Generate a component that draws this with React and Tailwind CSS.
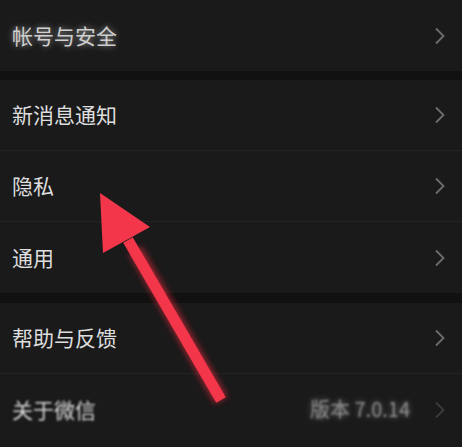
import React from "react";

const Chevron = ({ dim }) => (
  <svg width="12" height="18" viewBox="0 0 12 18" className={dim ? "opacity-40 blur-[0.6px]" : ""}>
    <path d="M2 1.5 L9.5 9 L2 16.5" fill="none" stroke="#6e6e6e" strokeWidth="1.8" />
  </svg>
);

const Row = ({ label, right, glow, blurry, divider }) => (
  <div className={`relative flex h-[71px] items-center justify-between pl-3 pr-[16px] ${divider ? "border-b border-[#242424]" : ""}`}>
    <span
      className={`mb-[1px] text-[21px] leading-none ${glow ? "text-[#cfcfcf] [text-shadow:0_0_6px_rgba(255,255,255,0.55)]" : "text-[#dedede]"} ${blurry ? "blur-[1px] text-[#bdbdbd]" : ""}`}
    >
      {label}
    </span>
    <div className="flex items-center gap-[24px]">
      {right && (
        <span className="mb-[1px] text-[20px] leading-none text-[#8c8c8c] blur-[0.8px] [text-shadow:0_0_6px_rgba(255,255,255,0.4)]">
          {right}
        </span>
      )}
      <Chevron dim={blurry} />
    </div>
  </div>
);

const App = () => {
  return (
    <div
      className="relative h-[447px] w-[462px] overflow-hidden bg-[#1a1a1a]"
      style={{ fontFamily: '"Noto Sans CJK SC", "Noto Sans", sans-serif' }}
    >
      <Row label="帐号与安全" glow />
      <div className="h-[9px] bg-[#111111]" />
      <Row label="新消息通知" divider />
      <Row label="隐私" divider />
      <Row label="通用" />
      <div className="h-[10px] bg-[#111111]" />
      <Row label="帮助与反馈" divider />
      <Row label="关于微信" right="版本 7.0.14" blurry />

      {/* red arrow drawn over the list */}
      <svg className="pointer-events-none absolute left-0 top-0" width="462" height="447" viewBox="0 0 462 447">
        <defs>
          <filter id="glow" x="-50%" y="-50%" width="200%" height="200%">
            <feGaussianBlur stdDeviation="3" />
          </filter>
        </defs>
        <line x1="135" y1="250" x2="221" y2="400" stroke="#ff2a40" strokeWidth="14" opacity="0.6" filter="url(#glow)" />
        <line x1="128" y1="240" x2="221" y2="400" stroke="#f4364b" strokeWidth="11" />
        <polygon points="100,193 150,227 103,253" fill="#f4364b" />
      </svg>
    </div>
  );
};

export default App;
